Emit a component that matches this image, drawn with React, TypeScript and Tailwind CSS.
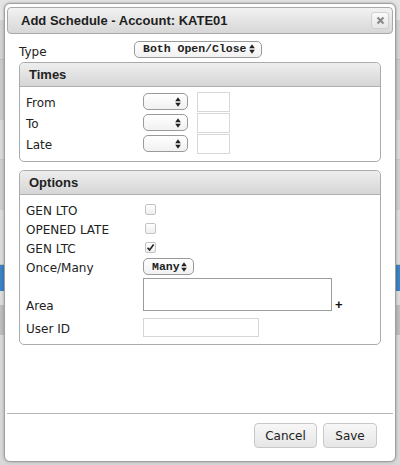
import React from "react";

const font = { fontFamily: '"DejaVu Sans", Verdana, sans-serif' };
const boldFont = { fontFamily: '"Liberation Sans", Arial, sans-serif' };

function Arrows() {
  return (
    <svg width="6" height="10" viewBox="0 0 6 10" className="shrink-0">
      <path d="M3 0.3 L5.8 4.2 H0.2 Z" fill="#222" />
      <path d="M3 9.7 L5.8 5.8 H0.2 Z" fill="#222" />
    </svg>
  );
}

function Select({ text, w }: { text?: string; w: string }) {
  return (
    <div
      className={`${w} h-[17px] rounded-[5px] border border-[#9a9a9a] bg-gradient-to-b from-white to-[#f1f1f1] flex items-center justify-between pl-[8px] pr-[6px]`}
    >
      <span
        className="text-[11.5px] font-bold text-[#222] leading-none"
        style={{ fontFamily: '"Liberation Mono", "Courier New", monospace' }}
      >
        {text ?? ""}
      </span>
      <Arrows />
    </div>
  );
}

function Check({ checked }: { checked?: boolean }) {
  return (
    <div className="w-[11px] h-[11px] rounded-[2px] border border-[#c4c4c4] bg-gradient-to-b from-white to-[#eeeeee] flex items-center justify-center">
      {checked && (
        <svg width="9" height="9" viewBox="0 0 9 9">
          <path d="M1.5 4.8 L3.6 7 L7.6 1.6" stroke="#222" strokeWidth="1.6" fill="none" />
        </svg>
      )}
    </div>
  );
}

function PanelHeader({ title }: { title: string }) {
  return (
    <div className="h-[24px] rounded-t-[5px] border-b border-[#b0b0b0] bg-gradient-to-b from-[#eeeeee] to-[#d6d6d6] flex items-center pl-[9px]">
      <span className="text-[13px] font-bold text-[#222]" style={boldFont}>{title}</span>
    </div>
  );
}

function Row({ label, h, children }: { label: string; h: string; children?: React.ReactNode }) {
  return (
    <div className={`flex items-center ${h}`}>
      <div className="w-[117px] pt-[3px] text-[12px] text-[#222]">{label}</div>
      {children}
    </div>
  );
}

export default function App() {
  return (
    <div className="relative w-[400px] h-[465px] overflow-hidden bg-[#d3d3d3]" style={font}>
      {/* background page rows */}
      <div className="flex flex-col">
        <div className="h-[20px] bg-[#e4e4e4]" />
        <div className="h-[40px] bg-[#d2d2d2] border-b border-[#bdbdbd]" />
        <div className="h-[60px] bg-[#cacaca]" />
        <div className="h-[40px] bg-[#dadada] border-b border-[#c4c4c4]" />
        <div className="h-[50px] bg-[#cfcfcf]" />
        <div className="h-[55px] bg-[#dcdcdc] border-b border-[#c2c2c2]" />
        <div className="h-[26px] bg-[#3c82c4]" />
        <div className="h-[14px] bg-[#dcdcdc]" />
        <div className="h-[30px] bg-[#bdbdbd]" />
        <div className="h-[130px] bg-[#d8d8d8]" />
      </div>

      {/* dialog */}
      <div className="absolute left-[4px] top-[3px] w-[392px] h-[459px] rounded-[6px] border border-[#a0a0a0] bg-white shadow-[0_0_3px_rgba(0,0,0,0.3)] flex flex-col">
        {/* title bar */}
        <div className="mx-[2px] mt-[3px] h-[27px] rounded-[4px] border border-[#a9a9a9] bg-gradient-to-b from-[#f2f2f2] to-[#d7d7d7] flex items-center justify-between pl-[13px] pr-[3px]">
          <span className="text-[13px] font-bold text-[#1e1e1e]" style={boldFont}>Add Schedule - Account: KATE01</span>
          <div className="w-[18px] h-[17px] rounded-[3px] border border-[#d0d0d0] bg-gradient-to-b from-[#fafafa] to-[#e6e6e6] flex items-center justify-center">
            <svg width="9" height="9" viewBox="0 0 9 9">
              <path d="M1.5 1.5 L7.5 7.5 M7.5 1.5 L1.5 7.5" stroke="#8a8a8a" strokeWidth="2.2" />
            </svg>
          </div>
        </div>

        <div className="px-[14px] flex flex-col">
          {/* Type row */}
          <div className="flex items-center h-[18px] mt-[6px]">
            <div className="w-[115px] pt-[5px] text-[12px] text-[#222]">Type</div>
            <Select text="Both Open/Close" w="w-[128px]" />
          </div>

          {/* Times */}
          <div className="mt-[4px] h-[100px] rounded-[5px] border border-[#ababab] flex flex-col">
            <PanelHeader title="Times" />
            <div className="pl-[6px] pt-[4px] flex flex-col">
              {["From", "To", "Late"].map((l) => (
                <Row key={l} label={l} h="h-[21px]">
                  <Select w="w-[45px]" />
                  <div className="ml-[9px] w-[33px] h-[20px] border border-[#d8d8d8] bg-white" />
                </Row>
              ))}
            </div>
          </div>

          {/* Options */}
          <div className="mt-[8px] h-[175px] rounded-[5px] border border-[#ababab] flex flex-col">
            <PanelHeader title="Options" />
            <div className="pl-[6px] pt-[5px] flex flex-col">
              <Row label="GEN LTO" h="h-[19px]">
                <div className="ml-[2px]"><Check /></div>
              </Row>
              <Row label="OPENED LATE" h="h-[19px]">
                <div className="ml-[2px]"><Check /></div>
              </Row>
              <Row label="GEN LTC" h="h-[19px]">
                <div className="ml-[2px]"><Check checked /></div>
              </Row>
              <Row label="Once/Many" h="h-[19px]">
                <Select text="Many" w="w-[51px]" />
              </Row>
              <div className="flex items-end mt-[2px]">
                <div className="w-[117px] text-[12px] text-[#222] leading-[9px]">Area</div>
                <div className="w-[189px] h-[33px] border border-[#9c9c9c] bg-white" />
                <span className="ml-[3px] text-[13px] font-bold text-[#111] leading-none" style={boldFont}>+</span>
              </div>
              <Row label="User ID" h="h-[19px] mt-[7px]">
                <div className="w-[116px] h-[19px] border border-[#d6d6d6] bg-white" />
              </Row>
            </div>
          </div>
        </div>

        <div className="mt-auto mx-[2px] border-t border-[#b5b5b5]" />
        <div className="flex justify-end gap-[6px] pr-[18px] pt-[9px] pb-[13px]">
          <button className="w-[63px] h-[25px] rounded-[4px] border border-[#c8c8c8] bg-gradient-to-b from-[#f7f7f7] to-[#e6e6e6] text-[12px] text-[#222]">
            Cancel
          </button>
          <button className="w-[54px] h-[25px] rounded-[4px] border border-[#c8c8c8] bg-gradient-to-b from-[#f7f7f7] to-[#e6e6e6] text-[12px] text-[#222]">
            Save
          </button>
        </div>
      </div>
    </div>
  );
}
